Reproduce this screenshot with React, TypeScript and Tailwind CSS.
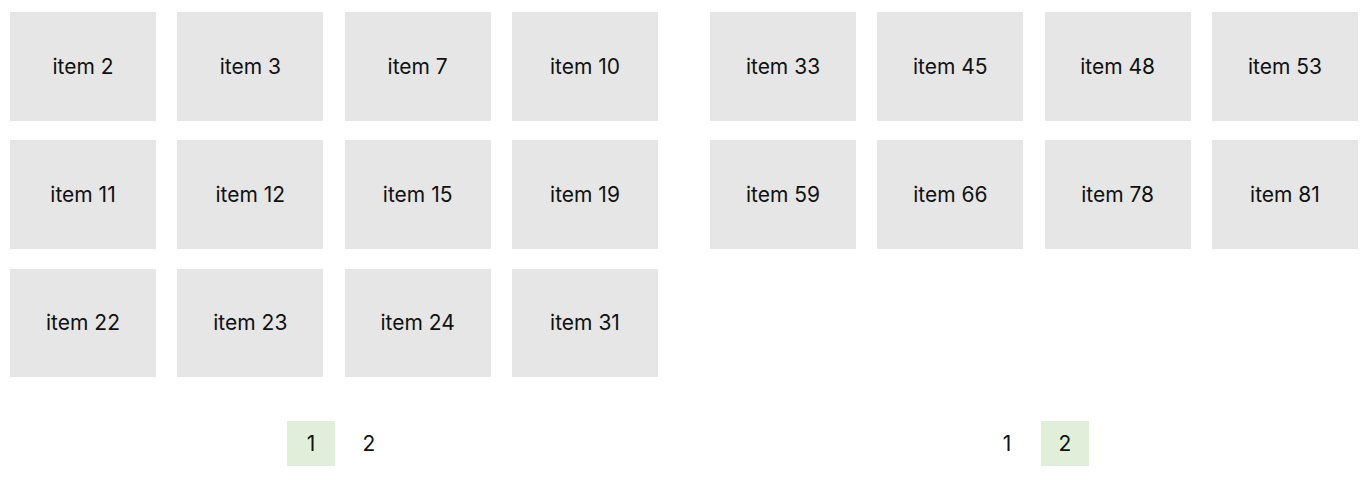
import React, { useState } from "react";

const leftItems = [2, 3, 7, 10, 11, 12, 15, 19, 22, 23, 24, 31];
const rightItems = [33, 45, 48, 53, 59, 66, 78, 81];

const Grid: React.FC<{ items: number[] }> = ({ items }) => (
  <div className="grid grid-cols-4 gap-x-[21.33px] gap-y-[19.67px] w-[648px]">
    {items.map((n) => (
      <div
        key={n}
        className="h-[108.67px] bg-[#e6e6e6] flex items-center justify-center text-[21px] text-[#111]"
      >
        item {n}
      </div>
    ))}
  </div>
);

const Pager: React.FC<{ active: number; shift: string }> = ({ active, shift }) => (
  <div className={`flex justify-center gap-[9.5px] ${shift}`}>
    {[1, 2].map((p) => (
      <button
        key={p}
        className={
          p === active
            ? "w-[48.5px] h-[45px] flex items-center justify-center text-[21px] text-[#111] bg-[#e1efda]"
            : "w-[48.5px] h-[45px] flex items-center justify-center text-[21px] text-[#111]"
        }
      >
        {p}
      </button>
    ))}
  </div>
);

const App: React.FC = () => {
  const [pages] = useState({ left: 1, right: 2 });
  return (
    <div
      className="min-h-screen bg-white flex gap-[52px] pl-[10px] pt-[12px]"
      style={{ fontFamily: "Inter, 'Noto Sans', sans-serif" }}
    >
      <div className="flex flex-col w-[648px]">
        <div className="h-[366px]">
          <Grid items={leftItems} />
        </div>
        <div className="mt-[43px]">
          <Pager active={pages.left} shift="pl-[12px]" />
        </div>
      </div>
      <div className="flex flex-col w-[648px]">
        <div className="h-[366px]">
          <Grid items={rightItems} />
        </div>
        <div className="mt-[43px]">
          <Pager active={pages.right} shift="pl-[4px]" />
        </div>
      </div>
    </div>
  );
};

export default App;
